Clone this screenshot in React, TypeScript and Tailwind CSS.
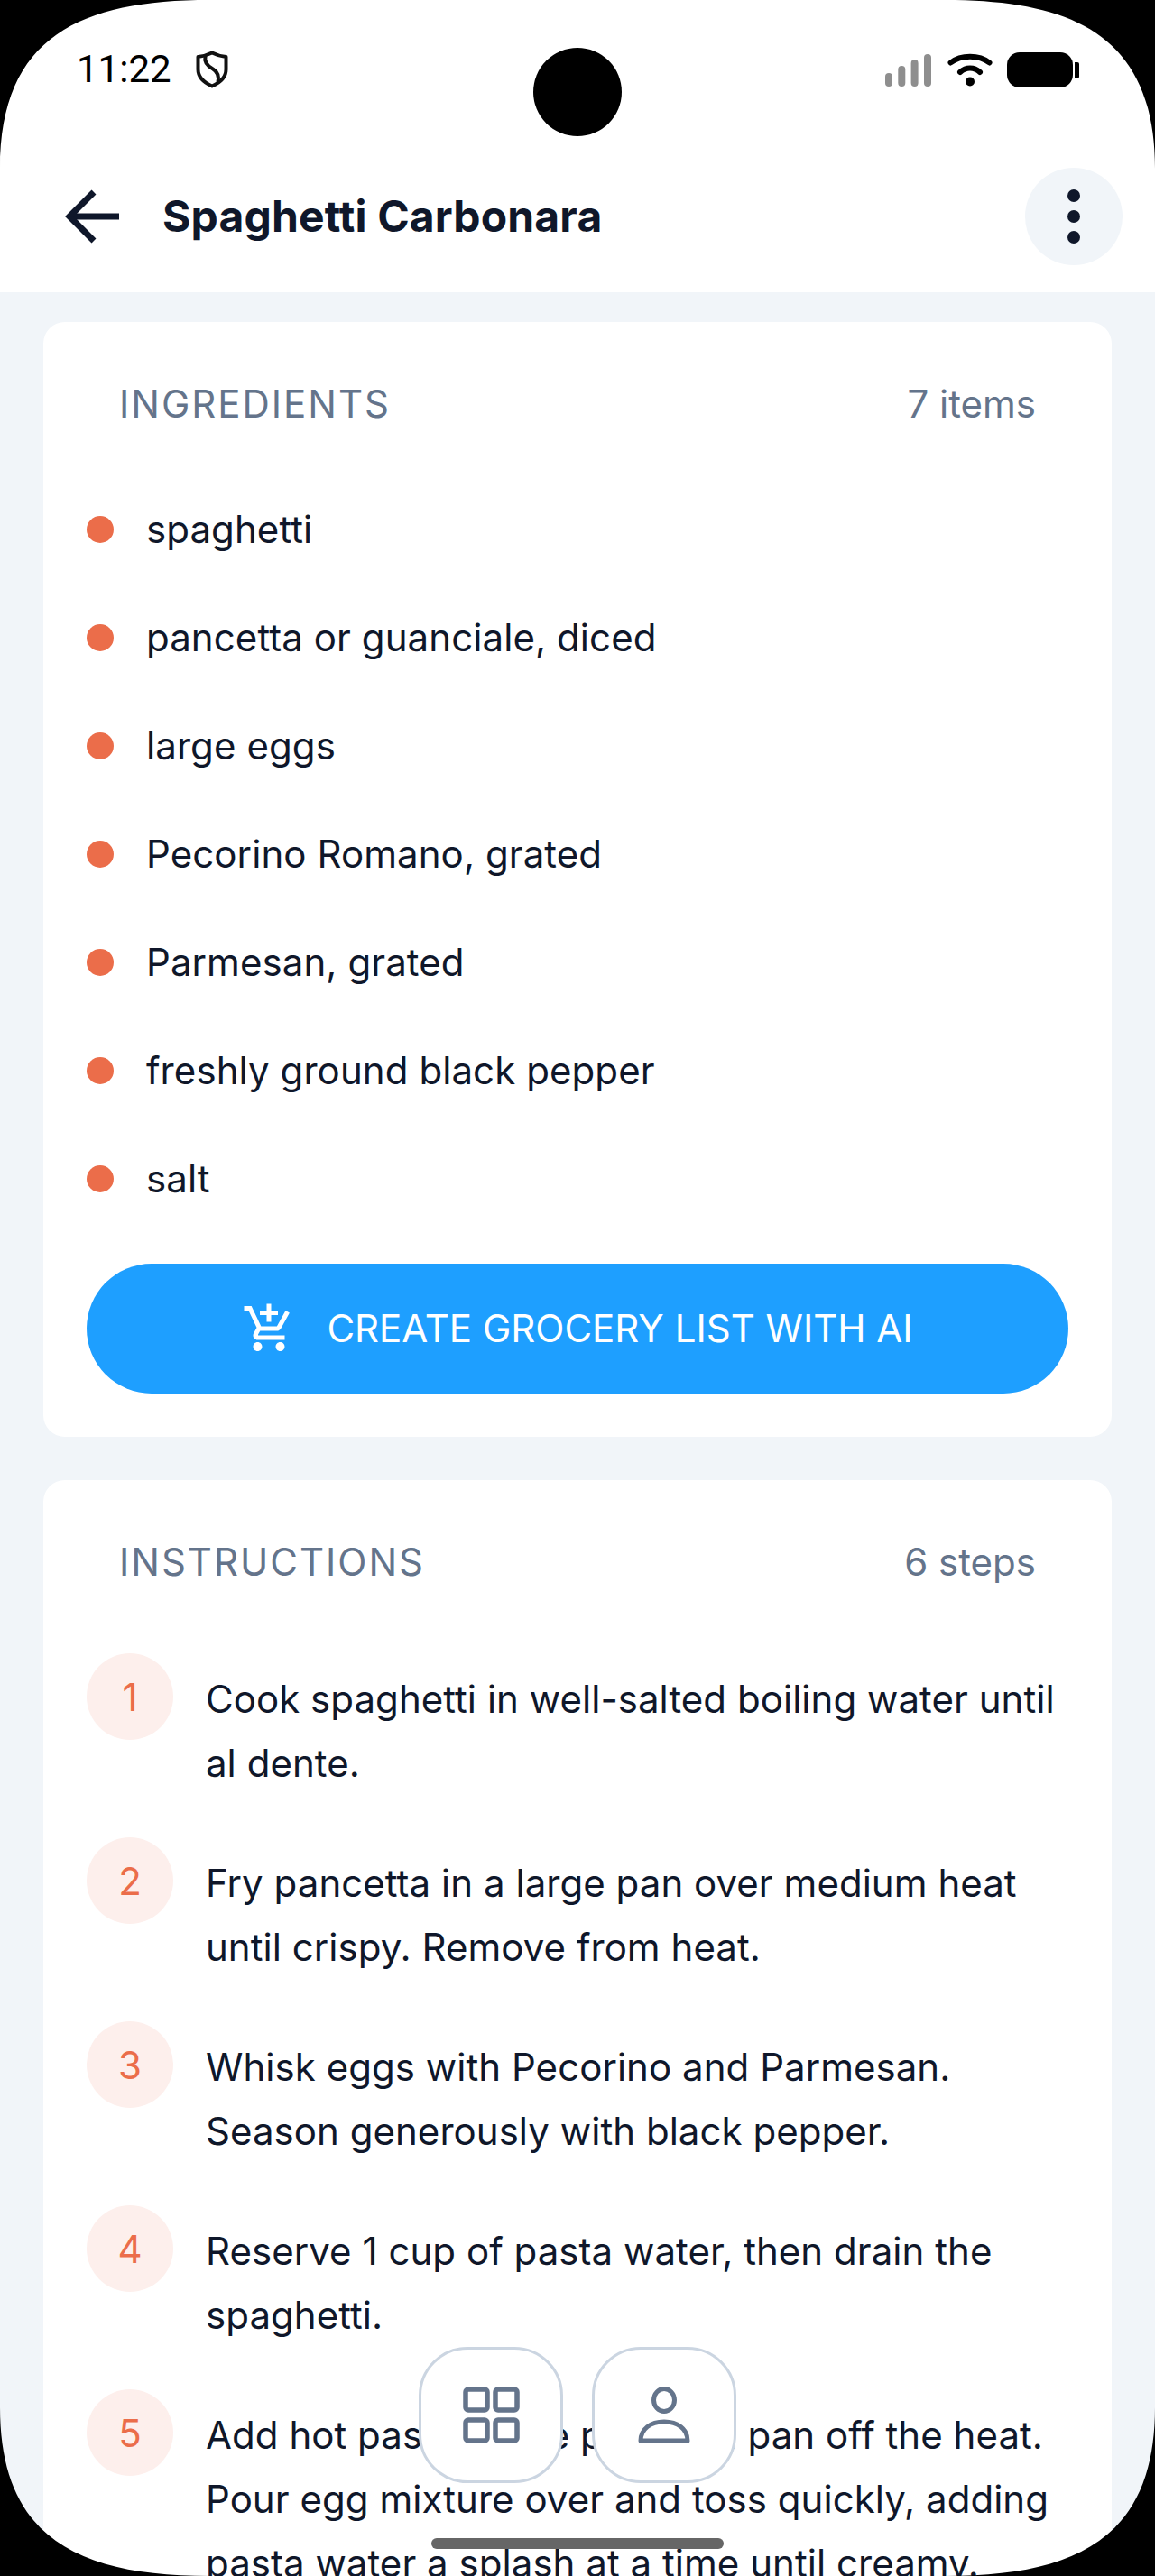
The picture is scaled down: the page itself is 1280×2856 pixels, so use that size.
import React from 'react';

const ingredients = [
  'spaghetti',
  'pancetta or guanciale, diced',
  'large eggs',
  'Pecorino Romano, grated',
  'Parmesan, grated',
  'freshly ground black pepper',
  'salt',
];

const steps = [
  'Cook spaghetti in well-salted boiling water until al dente.',
  'Fry pancetta in a large pan over medium heat until crispy. Remove from heat.',
  'Whisk eggs with Pecorino and Parmesan. Season generously with black pepper.',
  'Reserve 1 cup of pasta water, then drain the spaghetti.',
  'Add hot pasta to the pancetta pan off the heat. Pour egg mixture over and toss quickly, adding pasta water a splash at a time until creamy.',
];

// Black device corner, flipped for each side of the screen
const Corner: React.FC<{ className: string }> = ({ className }) => (
  <svg width="232" height="187" viewBox="0 0 232 187" className={`absolute ${className}`}>
    <path d="M0 0H232C90 0 0 40 0 187Z" fill="#000" />
  </svg>
);

const StatusBar = () => (
  <div className="relative flex h-[186px] items-start justify-between pl-[85px] pr-[84px] pt-[51px]">
    <div className="flex items-center gap-[27px]">
      <span className="font-[Roboto,sans-serif] text-[42px] leading-[52px] text-black">11:22</span>
      <svg width="36" height="42" viewBox="0 0 36 42" fill="none" stroke="#111" strokeWidth="4" strokeLinejoin="round">
        <path d="M18 2.5C23 5 28 6.5 33.5 7V21C33.5 29.5 27 35.5 18 39.5C9 35.5 2.5 29.5 2.5 21V7C8 6.5 13 5 18 2.5Z" />
        <path d="M10.5 6.5C9 13 13.5 17.5 19 20.5C24 23.5 26 28 24.5 35" />
      </svg>
    </div>
    <div className="flex items-start gap-[8px] pt-[7px]">
      <svg width="52" height="37" viewBox="0 0 52 37" fill="#8e8e8e" className="mt-[2px] mr-[9px]">
        <rect x="0" y="21" width="8" height="15" rx="4" />
        <rect x="14.3" y="13" width="8" height="23" rx="4" />
        <rect x="28.6" y="6" width="8" height="30" rx="4" />
        <rect x="43" y="0" width="8" height="36" rx="4" />
      </svg>
      <svg width="50" height="38" viewBox="0 0 50 38" fill="none" stroke="#000" strokeWidth="6" strokeLinecap="round" className="mt-[1px] mr-[8px]">
        <path d="M3.5 10.5C15 1.5 35 1.5 46.5 10.5" />
        <path d="M14 21C20.5 15 29.5 15 36 21" />
        <circle cx="25" cy="31.5" r="5" fill="#000" stroke="none" />
      </svg>
      <div className="flex items-center gap-[2px]">
        <div className="h-[39px] w-[73px] rounded-[14px] bg-black" />
        <div className="h-[18px] w-[5px] rounded-r-[2px] bg-black" />
      </div>
    </div>
  </div>
);

const Header = () => (
  <div className="flex h-[138px] items-start justify-between bg-white pl-[72px] pr-[36px]">
    <div className="flex h-[108px] items-center gap-[48px]">
      <svg width="60" height="60" viewBox="0 0 60 60" fill="none" stroke="#0f172a" strokeWidth="7">
        <path d="M60 30H5" />
        <path d="M32 3L5 30L32 57" />
      </svg>
      <span className="text-[48px] font-bold leading-[60px] tracking-[0.15px] text-[#0f172a]">Spaghetti Carbonara</span>
    </div>
    <button className="flex h-[108px] w-[108px] flex-col items-center justify-center gap-[9px] rounded-full bg-[#f1f5f9]">
      <span className="h-[14px] w-[14px] rounded-full bg-[#0f172a]" />
      <span className="h-[14px] w-[14px] rounded-full bg-[#0f172a]" />
      <span className="h-[14px] w-[14px] rounded-full bg-[#0f172a]" />
    </button>
  </div>
);

const CardHeading: React.FC<{ title: string; meta: string }> = ({ title, meta }) => (
  <div className="flex items-center justify-between px-[36px]">
    <span className="text-[42px] leading-[54px] tracking-[2px] text-[#64748b]">{title}</span>
    <span className="text-[42px] leading-[54px] text-[#64748b]">{meta}</span>
  </div>
);

const IngredientsCard = () => (
  <section className="rounded-[24px] bg-white p-[48px]">
    <div className="pt-[16px]">
      <CardHeading title="INGREDIENTS" meta="7 items" />
    </div>
    <ul className="mt-[82px] flex flex-col gap-[60px]">
      {ingredients.map((item) => (
        <li key={item} className="flex h-[60px] items-center gap-[36px]">
          <span className="h-[30px] w-[30px] shrink-0 rounded-full bg-[#eb6d4a]" />
          <span className="text-[42px] leading-[60px] tracking-[0.08px] text-[#0f172a]">{item}</span>
        </li>
      ))}
    </ul>
    <button className="mt-[64px] flex h-[144px] w-full items-center justify-center gap-[34px] rounded-full bg-[#1e9fff] text-white">
      <svg width="60" height="60" viewBox="0 0 24 24" fill="currentColor">
        <path d="M11 9h2V6h3V4h-3V1h-2v3H8v2h3v3zm-4 9c-1.1 0-1.99.9-1.99 2S5.9 22 7 22s2-.9 2-2-.9-2-2-2zm10 0c-1.1 0-1.99.9-1.99 2s.89 2 1.99 2 2-.9 2-2-.9-2-2-2zm-9.83-3.25l.03-.12.9-1.63h7.45c.75 0 1.41-.41 1.75-1.03l3.86-7.01L19.42 4h-.01l-1.1 2-2.76 5H8.53l-.13-.27L6.16 6l-.95-2-.94-2H1v2h2l3.6 7.59-1.35 2.45c-.16.28-.25.61-.25.96 0 1.1.9 2 2 2h12v-2H7.42c-.13 0-.25-.11-.25-.25z" />
      </svg>
      <span className="text-[42px] leading-[54px]">CREATE GROCERY LIST WITH AI</span>
    </button>
  </section>
);

const InstructionsCard = () => (
  <section className="rounded-[24px] bg-white px-[48px] pt-[48px]">
    <div className="pt-[16px]">
      <CardHeading title="INSTRUCTIONS" meta="6 steps" />
    </div>
    <ol className="mt-[74px] flex flex-col gap-[47px]">
      {steps.map((step, i) => (
        <li key={i} className="flex items-start gap-[36px]">
          <span className="flex h-[96px] w-[96px] shrink-0 items-center justify-center rounded-full bg-[#fdefec] text-[42px] text-[#eb6d4a]">
            {i + 1}
          </span>
          <p className="pt-[15px] text-[42px] leading-[71px] tracking-[0.04px] text-[#0f172a]">{step}</p>
        </li>
      ))}
    </ol>
  </section>
);

const BottomNav = () => (
  <div className="absolute bottom-[103px] left-0 right-0 flex justify-center gap-[32px]">
    <button className="flex h-[151px] w-[160px] items-center justify-center rounded-[54px] border-[3px] border-[#cbd5e1] bg-white">
      <svg width="63" height="63" viewBox="0 0 63 63" fill="none" stroke="#64748b" strokeWidth="5.5">
        <rect x="3" y="3" width="24" height="23" rx="3" />
        <rect x="36" y="3" width="24" height="23" rx="3" />
        <rect x="3" y="37" width="24" height="23" rx="3" />
        <rect x="36" y="37" width="24" height="23" rx="3" />
      </svg>
    </button>
    <button className="flex h-[151px] w-[160px] items-center justify-center rounded-[54px] border-[3px] border-[#cbd5e1] bg-white">
      <svg width="58" height="63" viewBox="0 0 58 63" fill="none" stroke="#64748b" strokeWidth="5" strokeLinejoin="round">
        <ellipse cx="29" cy="15" rx="11.5" ry="12.5" />
        <path d="M3 60C3 47 14 39 29 39C44 39 55 47 55 60Z" />
      </svg>
    </button>
  </div>
);

export default function App() {
  return (
    <div className="relative h-[2856px] w-[1280px] overflow-hidden bg-[#f1f5f9] font-[Inter,sans-serif]">
      <div className="bg-white">
        <StatusBar />
        <Header />
      </div>
      <main className="flex flex-col gap-[48px] px-[48px] pt-[33px]">
        <IngredientsCard />
        <InstructionsCard />
      </main>

      <BottomNav />

      {/* Camera cutout */}
      <div className="absolute left-[591px] top-[53px] h-[98px] w-[98px] rounded-full bg-black" />
      {/* Home indicator */}
      <div className="absolute bottom-[30px] left-[478px] h-[12px] w-[324px] rounded-full bg-[#666666]" />

      <Corner className="left-0 top-0" />
      <Corner className="right-0 top-0 -scale-x-100" />
      <Corner className="bottom-0 left-0 -scale-y-100" />
      <Corner className="bottom-0 right-0 -scale-100" />
    </div>
  );
}
